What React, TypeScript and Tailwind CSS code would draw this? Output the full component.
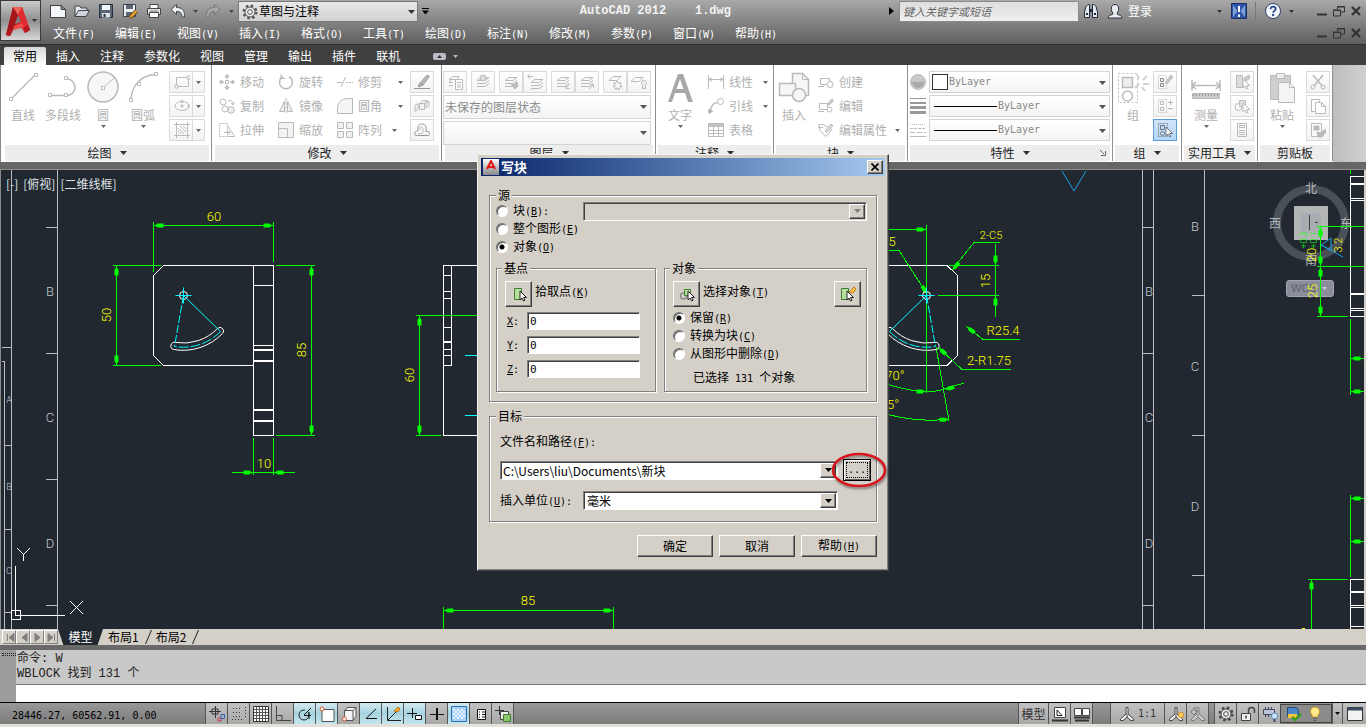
import type { ReactNode } from 'react'
import clsx from 'clsx'

const RAISED =
  'border border-white border-r-[#404040] border-b-[#404040] shadow-[inset_-1px_-1px_0_#808080]'
const SUNKEN =
  'border border-[#808080] border-r-white border-b-white shadow-[inset_1px_1px_0_#404040]'
const ETCHED =
  'border border-[#808080] shadow-[1px_1px_0_#fff,inset_1px_1px_0_#fff]'

/** 中文 12px、西文等宽 10px 的混排文字，`&` 后的字符加下划线 */
function Txt({ t }: { t: string }) {
  return (
    <span className="whitespace-pre">
      {t.split(/([\x20-\x7e]+)/).map((part, i) =>
        i % 2 ? (
          <span key={i} className="font-['DejaVu_Sans_Mono',monospace] text-[10px]">
            {part.split(/(&.)/).map((s, j) => (s[0] === '&' ? <u key={j}>{s[1]}</u> : s))}
          </span>
        ) : (
          part
        ),
      )}
    </span>
  )
}

function Ico({ children, s = 16, className }: { children: ReactNode; s?: number; className?: string }) {
  return (
    <svg
      width={s}
      height={s}
      viewBox={`0 0 ${s} ${s}`}
      fill="none"
      stroke="currentColor"
      className={clsx('flex-shrink-0', className)}
      aria-hidden="true"
    >
      {children}
    </svg>
  )
}

function Caret({ className }: { className?: string }) {
  return (
    <svg width="7" height="4" viewBox="0 0 7 4" className={clsx('flex-shrink-0', className)} aria-hidden="true">
      <path d="M0 0h7L3.5 4z" fill="currentColor" />
    </svg>
  )
}

function SmallCaret({ className }: { className?: string }) {
  return (
    <svg width="5" height="3" viewBox="0 0 5 3" className={clsx('flex-shrink-0', className)} aria-hidden="true">
      <path d="M0 0h5L2.5 3z" fill="currentColor" />
    </svg>
  )
}

/* ---------- 标题栏 ---------- */

const quickIcons: { label: string; icon: ReactNode }[] = [
  {
    label: '新建',
    icon: <path d="M.500 2.500h10.500l4.500 4v8H.500z M11 2.500v4h4.500" fill="#f4f6f8" stroke="#3c4248" />,
  },
  {
    label: '打开',
    icon: (
      <>
        <path d="M1 13V3h5l1 2h6v3" fill="#e8ebee" stroke="#3c4248" />
        <path d="M1 13.500 4.500 7.500h11L12 13.500z" fill="#cfd5dc" stroke="#3c4248" />
      </>
    ),
  },
  {
    label: '保存',
    icon: (
      <>
        <path d="M1.500 1.500h13v13h-13z" fill="#5b6573" stroke="#22303f" />
        <path d="M4 2h8v5H4z" fill="#f2f4f7" stroke="none" />
        <path d="M4 10h8v4.500H4z" fill="#dfe3e8" stroke="none" />
        <path d="M5.500 11h2v3h-2z" fill="#22303f" stroke="none" />
      </>
    ),
  },
  {
    label: '另存为',
    icon: (
      <>
        <path d="M1.500 1.500h12v12h-12z" fill="#f0f1f3" stroke="#3a4350" />
        <path d="M4 2h7v4H4z M4 9h6v4H4z" fill="#5b6573" stroke="none" />
        <path d="M8 14.500 14.500 8" stroke="#7a4a08" strokeWidth="4" />
        <path d="M8.500 14 14.500 8" stroke="#f0b040" strokeWidth="2" />
      </>
    ),
  },
  {
    label: '打印',
    icon: (
      <>
        <path d="M4 1.500h8v5H4z" fill="#fff" stroke="#444" />
        <path d="M1.500 5.500h13v6h-13z" fill="#e3e3e3" stroke="#444" />
        <path d="M3.500 9.500h9v5h-9z" fill="#fff" stroke="#444" />
        <path d="M4 8h8" stroke="#777" />
      </>
    ),
  },
  {
    label: '放弃',
    icon: (
      <path
        d="M1 6.500 6.500 1.500v3c5 0 8 2 8 8v1.500h-2.500c0-4-1.500-5.500-5.500-5.500v3z"
        fill="#eef1f4"
        stroke="#3e454c"
      />
    ),
  },
]

function TitleBar() {
  return (
    <header className="flex h-[45px] flex-shrink-0 border-b border-[#2f2f2f] bg-linear-to-b from-[#a9a9a9] to-[#5f5f5f]">
      <button
        aria-label="应用程序菜单"
        className="flex h-[41px] w-[41px] items-center justify-center gap-px border border-[#3a3a3a] bg-linear-to-b from-[#c9c9c9] via-[#8f8f8f] to-[#d8d8d8] text-[#333]"
      >
        <Logo />
        <SmallCaret />
      </button>
      <div className="min-w-0 flex-1">
        <div className="flex h-[22px] items-center">
          <div className="flex flex-1 items-center">
            <div className="ml-[9px] flex items-center gap-2">
              {quickIcons.map((q) => (
                <button key={q.label} aria-label={q.label}>
                  <Ico>{q.icon}</Ico>
                </button>
              ))}
            </div>
            <SmallCaret className="ml-[7px] text-[#444]" />
            <button aria-label="重做" className="ml-[7px]">
              <Ico>
                <path
                  d="M15 6.500 9.500 1.500v3c-5 0-8 2-8 8v1.500H4c0-4 1.500-5.500 5.500-5.500v3z"
                  fill="#a8a8a8"
                  stroke="#777"
                />
              </Ico>
            </button>
            <SmallCaret className="ml-2 text-[#444]" />
            <div className="relative ml-1 h-[21px] w-[180px] border border-[#777] bg-linear-to-b from-[#e8e8e8] to-[#d2d2d2]">
              <GearIcon className="absolute left-[3px] top-[2px] text-[#555]" />
              <select
                aria-label="工作空间"
                className="block h-full w-full appearance-none bg-transparent pl-[20px] text-[12px] leading-none text-black"
              >
                <option>草图与注释</option>
              </select>
              <Caret className="pointer-events-none absolute right-[2px] top-2 text-[#333]" />
            </div>
            <svg width="7" height="7" viewBox="0 0 7 7" className="ml-1 text-black" aria-hidden="true">
              <path d="M0 .500h7" stroke="currentColor" />
              <path d="M0 2.500h7L3.500 6.500z" fill="currentColor" />
            </svg>
          </div>
          <h1 className="mr-[158px] whitespace-pre font-['Liberation_Mono',monospace] text-[12px] font-bold text-[#f2f2f2]">
            AutoCAD 2012    1.dwg
          </h1>
          <div className="flex items-center">
            <svg width="5" height="8" viewBox="0 0 5 8" className="mr-[5px]" aria-hidden="true">
              <path d="M0 0v8l5-4z" />
            </svg>
            <input
              aria-label="搜索"
              placeholder="键入关键字或短语"
              className="h-[21px] w-[180px] border border-[#8a8a8a] bg-linear-to-b from-[#dedede] to-[#efefef] px-[3px] text-[11px] italic placeholder:text-[#666]"
            />
            <button aria-label="查找" className="ml-1">
              <Ico>
                <path
                  d="M3 3.500 5 1.500h1.500V14.500h-5V9zM13 3.500 11 1.500H9.500V14.500h5V9z"
                  fill="#e6eaf0"
                  stroke="#1f2a3a"
                />
                <path d="M6.500 6h3v3h-3z" fill="#1f2a3a" stroke="none" />
                <path d="M3 11h2M11 11h2" stroke="#1f2a3a" strokeWidth="2" />
              </Ico>
            </button>
            <button className="ml-2 flex items-center gap-[5px] text-[12px] text-white">
              <Ico>
                <path d="M1 15c0-2 2-3 4.500-3.500L6 10C3.500 8 3.500 1.500 8 1.500S12.500 8 10 10l.500 1.500C13 12 15 13 15 15z" fill="#e9edf2" stroke="#28303a" />
              </Ico>
              登录
            </button>
            <SmallCaret className="ml-[65px] text-[#333]" />
            <button aria-label="Autodesk Exchange" className="ml-[9px]">
              <Ico>
                <path d="M.500.500h15v15H.500z" fill="#2f55a8" stroke="#1b2f66" />
                <path d="M2 2l4.500 6L2 14zM14 2 9.500 8l4.500 6z" fill="#7f9fd8" stroke="none" />
                <path d="M8 3v6M8 11.500V14" stroke="#fff" strokeWidth="2" />
              </Ico>
            </button>
            <div className="ml-2 h-[18px] w-px bg-[#777]" />
            <button aria-label="帮助" className="ml-[9px]">
              <svg width="16" height="16" viewBox="0 0 16 16" aria-hidden="true">
                <circle cx="8" cy="8" r="7.500" fill="#f5f8fc" stroke="#2c3e63" />
                <path d="M5.500 6.200c0-3.600 5.200-3.200 5.200-.2 0 1.900-2.500 1.900-2.500 3.800" fill="none" stroke="#2a4c90" strokeWidth="1.800" />
                <circle cx="8.100" cy="12" r="1.200" fill="#2a4c90" />
              </svg>
            </button>
            <SmallCaret className="ml-2 text-[#333]" />
            <div className="ml-[23px] mr-[5px]">
              <WindowButtons target="应用程序" />
            </div>
          </div>
        </div>
        <div className="flex h-[22px] items-center">
          <nav className="flex flex-1 pl-[12px] text-[12px] text-white">
            {['文件(F)', '编辑(E)', '视图(V)', '插入(I)', '格式(O)', '工具(T)', '绘图(D)', '标注(N)', '修改(M)', '参数(P)', '窗口(W)', '帮助(H)'].map(
              (m) => (
                <button key={m} className="w-[62px] text-left">
                  <Txt t={m} />
                </button>
              ),
            )}
          </nav>
          <div className="mr-[5px]">
            <WindowButtons target="图形" />
          </div>
        </div>
      </div>
    </header>
  )
}

function WindowButtons({ target }: { target: string }) {
  return (
    <div className="flex items-center gap-[6px] text-[#333]">
      <button aria-label={`最小化${target}`}>
        <Ico s={10}><path d="M0 8.500h10" strokeWidth="2" /></Ico>
      </button>
      <button aria-label={`还原${target}`}>
        <Ico s={12}><path d="M4.500 4V1.500h7V7H8M4 2h8M.500 5.500h7V11h-7zM0 5h8" /></Ico>
      </button>
      <button aria-label={`关闭${target}`}>
        <Ico s={10}><path d="M1 1l8 8M9 1 1 9" strokeWidth="2.400" /></Ico>
      </button>
    </div>
  )
}

function Logo() {
  return (
    <svg width="26" height="32" viewBox="0 0 26 32" aria-hidden="true">
      <path d="M8 2h9l8 23-5 3-4-6-8 2-3 7-4-1z" fill="#d21f24" />
      <path d="M8 2 1 30l4 1 4-8 4-13z" fill="#a3161a" />
      <path d="M8 2h9l-4 8z" fill="#f0635a" />
      <path d="M13 10 17 2l8 23-5 3z" fill="#e02c30" />
      <path d="M13 10l-3 9 6-2z" fill="#7b7b7b" />
      <path d="M9 21l8-3 2 4-11 3z" fill="#f04a44" />
      <path d="M1 30l4 1 3-7-2-1zM20 28l5-3-2-5-4 3z" fill="#b5181d" />
    </svg>
  )
}

function GearIcon({ className }: { className?: string }) {
  return (
    <Ico className={className}>
      <circle cx="8" cy="8" r="6.300" strokeWidth="2.400" strokeDasharray="2.500 2.450" />
      <circle cx="8" cy="8" r="5" fill="#e8e8e8" />
      <circle cx="8" cy="8" r="2.300" fill="#fafafa" />
    </Ico>
  )
}

/* ---------- 功能区 ---------- */

function RibbonTabs() {
  return (
    <nav className="flex h-[20px] flex-shrink-0 items-end bg-[#404040] pl-1 text-[12px] text-white">
      <button className="h-[18px] rounded-t-[2px] bg-linear-to-b from-[#d8d8d8] to-white px-[9px] leading-[16px] text-black">常用</button>
      {['插入', '注释', '参数化', '视图', '管理', '输出', '插件', '联机'].map((t) => (
        <button key={t} className="h-[18px] px-[10px] leading-[16px]">{t}</button>
      ))}
      <button aria-label="最小化功能区" className="ml-[23px] flex h-[18px] items-center gap-[7px] text-[#bbb]">
        <svg width="13" height="7" viewBox="0 0 13 7" aria-hidden="true">
          <rect width="13" height="7" rx="2" fill="#b9bdc4" />
          <path d="M4 5h5L6.500 2z" fill="#333" />
        </svg>
        <SmallCaret />
      </button>
    </nav>
  )
}

function Panel({ title, className, children, caret = true, launcher }: {
  title: string
  className: string
  children: ReactNode
  caret?: boolean
  launcher?: boolean
}) {
  return (
    <section className={clsx('flex flex-shrink-0 flex-col border-r border-[#8f8f8f]', className)}>
      <div className="flex h-[80px] pt-[6px] text-[#bababa]">{children}</div>
      <button className="relative mx-[2px] flex h-[16px] items-center justify-center gap-2 bg-[#ededed] text-[12px] leading-none text-[#222]">
        {title}
        {caret && <Caret className="text-[#333]" />}
        {launcher && (
          <Ico s={8} className="absolute right-[3px] top-1 text-[#666]">
            <path d="M1 1l4 4M6.500 2v4.500H2" />
          </Ico>
        )}
      </button>
    </section>
  )
}

function Big({ label, icon, caret, className = 'w-10' }: {
  label?: string
  icon: ReactNode
  caret?: boolean
  className?: string
}) {
  return (
    <button className={clsx('flex h-[64px] flex-shrink-0 flex-col items-center', className)}>
      <Ico s={32}>{icon}</Ico>
      <span className="mt-1 text-[12px] leading-[16px] whitespace-nowrap text-[#b0b0b0]">{label}</span>
      {caret && <SmallCaret className="mt-[2px] text-[#666]" />}
    </button>
  )
}

function Item({ label, icon, caret, className = 'w-[59px]' }: {
  label: string
  icon: ReactNode
  caret?: string
  className?: string
}) {
  return (
    <button className={clsx('flex h-[22px] items-center gap-[5px] text-[12px] leading-none whitespace-nowrap', className)}>
      <Ico>{icon}</Ico>
      <span className="text-[#b0b0b0]">{label}</span>
      {caret && <SmallCaret className={clsx('text-[#666]', caret)} />}
    </button>
  )
}

function IconBox({ label, icon, active, split }: { label: string; icon: ReactNode; active?: boolean; split?: boolean }) {
  return (
    <button
      aria-label={label}
      className={clsx(
        'flex h-[22px] items-center border',
        split ? 'w-9 justify-between pl-[4px]' : 'w-6 justify-center',
        active
          ? 'border-[#5b9bd8] bg-linear-to-b from-[#cfe4fa] to-[#b5d6f6] text-[#6b7480]'
          : 'border-[#dadada] bg-linear-to-b from-white to-[#f3f3f3]',
      )}
    >
      <Ico>{icon}</Ico>
      {split && (
        <span className="flex h-full w-3 items-center justify-center border-l border-[#dadada]">
          <SmallCaret className="text-[#666]" />
        </span>
      )}
    </button>
  )
}

function RibbonSelect({ label, value, className, children, mono }: {
  label: string
  value: string
  className: string
  children?: ReactNode
  mono?: boolean
}) {
  return (
    <div className="relative h-[22px] flex-1 border border-[#d4d4d4] bg-linear-to-b from-white to-[#f4f4f4]">
      <select
        aria-label={label}
        className={clsx(
          'block h-full w-full appearance-none bg-transparent leading-none text-[#8a8a8a]',
          mono ? "font-['DejaVu_Sans_Mono',monospace] text-[10px]" : 'text-[12px]',
          className,
        )}
      >
        <option>{value}</option>
      </select>
      {children}
      <Caret className="pointer-events-none absolute right-[3px] top-[9px] text-[#555]" />
    </div>
  )
}

const cursor = <path d="M9 5v9l2-2 1.500 3 1.500-.700-1.500-2.800h3z" fill="#fff" />
const layers = <path d="M2 12.500h8l4-3M2 9.500h8l4-3M6 3.500h8l-4 3H2z" fill="none" />

function Ribbon() {
  return (
    <div className="flex h-[97px] flex-shrink-0 overflow-hidden border-l border-[#888] bg-white pb-px">
      <Panel title="绘图" className="w-[211px] pl-[2px]">
        <Big
          label="直线"
          icon={<><path d="M4 28 28 4" strokeWidth="1.500" /><path d="M2.500 26.500h3v3h-3zM27.500 2.500h3v3h-3z" fill="#fff" /></>}
        />
        <Big
          label="多段线"
          icon={<><path d="M4 24.500h15c12 0 12-16 0-17" strokeWidth="1.500" /><path d="M1.500 22.500h3v3h-3zM17.500 22.500h3v3h-3zM17.500 5.500h3v3h-3z" fill="#fff" /></>}
        />
        <Big
          label="圆"
          caret
          icon={<><circle cx="16" cy="16" r="15" fill="#f7f7f7" strokeWidth="1.500" /><path d="M16 17 27 7" /><path d="M14.500 15.500h3v3h-3z" fill="#fff" /></>}
        />
        <Big
          label="圆弧"
          caret
          icon={<><path d="M4 28C5 14 14 4 29 3.500" strokeWidth="1.500" /><path d="M2.500 27.500h3v3h-3zM10.500 11.500h3v3h-3zM27.500 1.500h3v3h-3z" fill="#fff" /></>}
        />
        <div className="ml-[6px] flex flex-col gap-[2px]">
          <IconBox split label="矩形" icon={<><path d="M2.500 3.500h12v9h-12z" /><path d="M1 11h3v3H1zM13 2h3v3h-3z" fill="#fff" /></>} />
          <IconBox split label="椭圆" icon={<><ellipse cx="8" cy="8" rx="7" ry="4.500" /><path d="M8 6v4M6 8h4" /><path d="M14 7h2v2h-2zM7 2.500h2v2H7z" fill="#fff" /></>} />
          <IconBox split label="图案填充" icon={<path d="M0 2.500h16M0 13.500h16M2.500 0v16M13.500 0v16M4 6l6 6M4 9l3 3M6 4l6 6M9 4l3 3" />} />
        </div>
      </Panel>

      <Panel title="修改" className="w-[230px] pl-[1px]">
        <div className="ml-[6px] flex flex-col gap-[2px]">
          <Item label="移动" icon={<><path d="M8 1v4M8 11v4M1 8h4M11 8h4M6 3l2-2 2 2M6 13l2 2 2-2M3 6 1 8l2 2M13 6l2 2-2 2" strokeWidth="1.500" /><path d="M6.500 6.500h3v3h-3z" /></>} />
          <Item label="复制" icon={<><circle cx="4" cy="4" r="3" /><circle cx="6" cy="11" r="3" /><circle cx="12" cy="12" r="3.300" fill="#eee" /><path d="M9 3c3-1 5 0 5 3M12 5l2 2 1.500-2.500" /></>} />
          <Item label="拉伸" icon={<><path d="M.500 1.500h8v13h-8z" strokeDasharray="2 1" /><path d="M9 4l6.500 10.500H9M5 10.500h6M9 8.500l2 2-2 2" /></>} />
        </div>
        <div className="flex flex-col gap-[2px]">
          <Item label="旋转" icon={<><path d="M5 2.500A6.500 6.500 0 1 0 11 2.500" strokeWidth="1.500" /><path d="M3 0v4.500h4.500" /></>} />
          <Item label="镜像" icon={<><path d="M6.500 3v10.500h-5zM9.500 3v10.500h5z" fill="#eee" /><path d="M8 0v16" strokeDasharray="3 1" /></>} />
          <Item label="缩放" icon={<path d="M.500 .500h15v15H.500zM.500 6.500h9v9h-9z" fill="#f2f2f2" />} />
        </div>
        <div className="flex w-[73px] flex-col gap-[2px]">
          <Item label="修剪" caret="ml-[11px]" className="w-[73px]" icon={<path d="M0 8.500h5M4 13 8.500 3M9 8.500h2M12 8.500h2M15 8.500h1" />} />
          <Item label="圆角" caret="ml-[11px]" className="w-[73px]" icon={<path d="M.500 15.500V10A9.500 9.500 0 0 1 10 .500h5.500v15z" fill="#f5f5f5" />} />
          <Item label="阵列" caret="ml-[5px]" className="w-[73px]" icon={<path d="M.500 .500h6v6h-6zM9.500 .500h6v6h-6zM.500 9.500h6v6h-6zM9.500 9.500h6v6h-6z" fill="#f0f0f0" />} />
        </div>
        <div className="flex flex-col gap-[2px]">
          <IconBox label="删除" icon={<><path d="M6 9 13 1l2.500 1.500L9 11l-4 2-1-1z" fill="#bbb" stroke="#999" /><path d="M0 14.500h16M6 9l3 2" stroke="#999" /></>} />
          <IconBox label="分解" icon={<path d="M1 7.500 4 5.500v6l-3 2zM5.500 5.500h5v6h-5zM5.500 5.500l3-3h5l-3 3M12 5l3-2v5l-3 2z" fill="#f3f3f3" />} />
          <IconBox label="偏移" icon={<><path d="M3.500 13.500h11c1.500 0 1.500-4-.500-4h-2V5c0-4-8-4-8 0v4H2.500c-2 0-2 4.500-1 4.500z" stroke="#999" /><path d="M4 11.500h4c2-1 1-5 .500-6-2-2-3 0-2 3" /></>} />
        </div>
      </Panel>

      <Panel title="图层" className="w-[214px] pl-[1px]">
        <div className="flex w-[208px] flex-col gap-[2px]">
          <div className="flex gap-1">
            <IconBox label="图层特性" icon={<><path d="M6 2.500h6l-2 3H2zM2 8.500h4M2 11.500h4M4 6l-2 2.500" /><path d="M8.500 5.500h7v10h-7zM10 8.500h4M10 11h4M10 13h4" fill="#fff" /></>} />
            <IconBox label="隔离" icon={<>{layers}<circle cx="8" cy="4" r="3" fill="#ddd" /></>} />
            <div className="flex">
              <IconBox label="匹配" icon={<>{layers}<path d="M8 10l3 1 3-3 1 4-3 3z" fill="#bbb" /></>} />
              <IconBox label="上一个" icon={<><g transform="translate(2 2)">{layers}</g><path d="M6 2.500H1M3 0 .500 2.500 3 5" /></>} />
            </div>
            <div className="flex">
              <IconBox label="置为当前" icon={<>{layers}<path d="M15 10l-4 4M11 11v3.500h3.500" /></>} />
              <IconBox label="更改到当前" icon={<>{layers}<path d="M10 15l4-4M11 10.500h3.500V14" /></>} />
            </div>
            <div className="flex">
              <IconBox label="冻结" icon={<><path d="M6 2.500h8l-4 4H2z" /><circle cx="10.500" cy="11.500" r="3.500" strokeDasharray="2 1" strokeWidth="2" /></>} />
              <IconBox label="关" icon={<><path d="M4 3.500h8l-4 4H0z" /><path d="M10.500 8.500c0-3 5-3 5 0 0 1.500-1 2-1 3v3h-3v-3c0-1-1-1.500-1-3z" fill="#eee" /></>} />
            </div>
          </div>
          <RibbonSelect label="图层状态" value="未保存的图层状态" className="pl-[1px]" />
          <RibbonSelect label="图层" value="" className="pl-[1px]" />
        </div>
      </Panel>

      <Panel title="注释" className="w-[118px]">
        <Big label="文字" caret className="w-[48px]" icon={<path d="M4 31 14 3h5l10 28h-5l-3-9H11l-3 9zM12.500 18h7L16 8z" fill="#a8a8a8" stroke="none" />} />
        <div className="ml-1 flex flex-col gap-[2px]">
          <Item label="线性" caret="ml-[5px]" icon={<path d="M.500 1v14M15.500 1v14M1 5.500h14M4 3.500l-3 2 3 2M12 3.500l3 2-3 2" />} />
          <Item label="引线" caret="ml-[5px]" icon={<><path d="M2 14C3 8 5 4.500 9.500 4.500" strokeWidth="1.500" /><path d="M.500 11 1 15.500l4-2.500" fill="#aaa" /><circle cx="12.500" cy="3.500" r="3" /></>} />
          <Item label="表格" icon={<><path d="M.500 1.500h15v13H.500z" /><path d="M1 2h14v3H1z" fill="#c4c4c4" stroke="none" /><path d="M1 8.500h14M1 11.500h14M5.500 5v10M10.500 5v10" /></>} />
        </div>
      </Panel>

      <Panel title="块" className="w-[134px]">
        <Big label="插入" icon={<><path d="M14.500 2.500h10l6 6v16h-16z" fill="#f6f6f6" strokeWidth="1.500" /><path d="M24.500 2.500v6h6" /><path d="M1.500 12.500h16v12h-16z" fill="#f6f6f6" strokeWidth="1.500" /><circle cx="21" cy="24" r="6.500" fill="#f6f6f6" strokeWidth="1.500" /></>} />
        <div className="ml-1 flex flex-col gap-[2px]">
          <Item label="创建" icon={<><path d="M2.500 4.500h9v6h-9zM0 12.500h6" /><circle cx="12" cy="10.500" r="3" fill="#fff" /></>} />
          <Item label="编辑" icon={<><path d="M1.500 5.500h8v6h-8zM0 13.500h6" /><circle cx="11.500" cy="11.500" r="2.500" fill="#fff" /><path d="M9 6l5-5 1.500 2-4.500 4z" fill="#ccc" /></>} />
          <Item label="编辑属性" caret="ml-[3px]" className="w-[86px]" icon={<><path d="M1 2.500h4l9 5-6 7-6-6zM0 5.500h5" /><path d="M7 9l6-7 2 1.500-6 7z" fill="#ddd" /></>} />
        </div>
      </Panel>

      <Panel title="特性" className="w-[205px]" launcher>
        <div className="mx-[2px] flex flex-1 flex-col gap-[2px]">
          <div className="flex items-center gap-[3px]">
            <Ico><circle cx="8" cy="8" r="7.500" fill="#c8c8c8" /><path d="M1 8h14" /><path d="M2 8a6 6 0 0 0 12 0z" fill="#a9a9a9" stroke="none" /></Ico>
            <RibbonSelect label="对象颜色" value="ByLayer" className="pl-[19px]" mono>
              <span className="pointer-events-none absolute left-[2px] top-[2px] h-4 w-4 border border-[#333] bg-white" />
            </RibbonSelect>
          </div>
          {['线宽', '线型'].map((label) => (
            <div key={label} className="flex items-center gap-[3px]">
              <Ico>
                {label === '线宽' ? (
                  <path d="M0 0h16v1H0zM0 4h16v2H0zM0 8h16v3H0zM0 13h16v3H0z" fill="#999" stroke="none" />
                ) : (
                  <><path d="M0 2.500h16" strokeDasharray="1 1" /><path d="M0 6.500h16" strokeDasharray="3 1" /><path d="M0 10.500h16" strokeDasharray="5 2" /><path d="M0 14.500h16" /></>
                )}
              </Ico>
              <RibbonSelect label={label} value="ByLayer" className="pl-[68px]" mono>
                <span className="pointer-events-none absolute left-[4px] top-[10px] h-px w-[63px] bg-black" />
              </RibbonSelect>
            </div>
          ))}
        </div>
      </Panel>

      <Panel title="组" className="w-[69px]">
        <Big label="组" icon={<><path d="M1.500 2.500h19v29h-19z" strokeDasharray="2 2" /><path d="M5.500 6.500h10v10h-10z" fill="#eee" strokeWidth="1.500" /><circle cx="10.500" cy="25" r="5" strokeWidth="1.500" /><path d="M18 17l4-4M22 8l-2-5M26 9l4-4M26 13h6M25 16l3 4" strokeWidth="2" stroke="#d2d2d2" /></>} />
        <div className="flex flex-col gap-[2px]">
          <IconBox label="解除编组" icon={<><path d="M1.500 1.500h8v13h-8z" strokeDasharray="1 1" /><path d="M3.500 4.500h3v3h-3zM3.500 9.500h3v3h-3z" stroke="#888" /><path d="M8 9l6-8 2 2-6 7z" fill="#ccc" /></>} />
          <IconBox label="组编辑" icon={<><path d="M1.500 1.500h8v13h-8z" strokeDasharray="1 1" /><path d="M3.500 3.500h3v3h-3zM3.500 9.500h3v3h-3zM11 4.500h5M13.500 2v5M11 10.500h5" /></>} />
          <IconBox active label="启用组选择" icon={<><path d="M1.500 1.500h9v13h-9z" strokeDasharray="1 1" /><path d="M3.500 3.500h4v4h-4z" /><circle cx="5.500" cy="11.500" r="2" />{cursor}</>} />
        </div>
      </Panel>

      <Panel title="实用工具" className="w-[76px]">
        <Big label="测量" caret className="w-[48px]" icon={<><path d="M2 9v11M30 9v11M2 14.500h28M6 11l-4 3.500L6 18M26 11l4 3.500-4 3.500" strokeWidth="1.500" /><path d="M2.500 22.500h27v5h-27z" fill="#ccc" /><path d="M3 24h26" stroke="#999" strokeDasharray="1 2" strokeWidth="2" /></>} />
        <div className="flex flex-col gap-[2px]">
          <IconBox label="快速选择" icon={<><path d="M2.500 1.500h6v12h-6z" fill="#ddd" /><path d="M10 4l5-3 1 3-4 3z" fill="#ccc" />{cursor}</>} />
          <IconBox label="全部选择" icon={<><circle cx="4.500" cy="9" r="3.500" /><path d="M5.500 2.500h6v6h-6z" fill="#ddd" />{cursor}</>} />
          <IconBox label="快速计算器" icon={<path d="M3.500 1.500h9v13h-9zM5.500 3.500h5v2h-5zM5 8.500h6M5 10.500h6M5 12.500h6" />} />
        </div>
      </Panel>

      <Panel title="剪贴板" className="w-[75px]" caret={false}>
        <Big label="粘贴" caret className="w-[48px]" icon={<><path d="M4.500 4.500h20v24h-20z" fill="#cfcfcf" /><path d="M10.500 2.500h8v5h-8z" fill="#eee" /><path d="M12.500 11.500h11l5 5v15h-16z" fill="#f4f4f4" /><path d="M23.500 11.500v5h5" /></>} />
        <div className="flex flex-col gap-[2px]">
          <IconBox label="剪切" icon={<><path d="M3 1l9 11M13 1 4 12" strokeWidth="1.500" /><circle cx="3" cy="13" r="2" /><circle cx="13" cy="13" r="2" /></>} />
          <IconBox label="复制" icon={<><path d="M1.500 1.500h8v12h-8z" fill="#fff" /><path d="M5.500 4.500h6l4 4v7h-10zM11.500 4.500v4h4" fill="#fff" /></>} />
          <IconBox label="特性匹配" icon={<><path d="M1.500 1.500h10v13h-10z" /><path d="M4 4h5v4H4z" fill="#bbb" /><path d="M7 10l4 1 4-4 1 3-4 5H8z" fill="#bbb" /></>} />
        </div>
      </Panel>
      <div className="-mb-px flex-1 bg-linear-to-r from-[#bdbdbd] to-[#d0d0d0]" />
    </div>
  )
}

/* ---------- 绘图区 ---------- */

function Arrow({ x, y, a }: { x: number; y: number; a: number }) {
  return <path d="M0 0 3 -1 4 -2h6v4H4L3 1z" transform={`translate(${x} ${y}) rotate(${a})`} fill="#00ff00" stroke="none" />
}

// a 为箭尾方向的角度：0 表示箭尖朝左
const arrows: [number, number, number][] = [
  [153, 225, 0], [273, 225, 180], [116, 265, 90], [116, 365, -90],
  [311, 265, 90], [311, 435, -90], [253, 472, 180], [273, 472, 0],
  [419, 315, 90], [419, 435, -90], [443, 610, 0], [613, 610, 180],
  [926, 229, 180], [927, 294, -122], [952, 270, -52], [995, 265, -90], [995, 295, 90],
  [966, 326, 38], [938, 347, 43], [926, 391, 180], [944, 389, -14], [949, 419, 178],
  [1320, 226, 90], [1320, 266, -90], [1320, 266, 90], [1320, 316, -90],
  [1350, 358, 0], [1350, 391, 0], [1350, 498, 0], [1350, 541, 0], [1311, 579, 90],
]

const frameLetters: [number, number, string][] = [
  [50, 296, 'B'], [50, 422, 'C'], [50, 548, 'D'],
  [1195, 231, 'B'], [1149, 296, 'B'], [1195, 371, 'C'], [1149, 422, 'C'], [1195, 511, 'D'], [1149, 548, 'D'],
]

const dimTexts: { x: number; y: number; t: string; v?: boolean }[] = [
  { x: 214, y: 221, t: '60' }, { x: 264, y: 468, t: '10' }, { x: 528, y: 605, t: '85' },
  { x: 111, y: 315, t: '50', v: true }, { x: 306, y: 350, t: '85', v: true }, { x: 414, y: 375, t: '60', v: true },
  { x: 892, y: 246, t: '5' }, { x: 990, y: 281, t: '15', v: true }, { x: 1003, y: 335, t: 'R25.4' },
  { x: 989, y: 365, t: '2-R1.75' }, { x: 895, y: 380, t: '70°' }, { x: 893, y: 409, t: '5°' },
  { x: 1316, y: 255, t: '20', v: true }, { x: 1317, y: 291, t: '25', v: true },
]

function Slot() {
  return (
    <>
      <g stroke="#fff">
        <circle r="4" />
        <path d="M34 33A48 48 0 0 1-8 47A3 3 0 0 0-10 54A55 55 0 0 0 39 38A3 3 0 0 0 34 33z" />
      </g>
      <g stroke="#00ffff">
        <path d="M-8 0H8M0-8V8M0 0 37 36" />
        <path d="M0 0-9 51" strokeDasharray="8 2" />
        <path d="M37 36A52 52 0 0 1-9 51" strokeDasharray="10 2" />
      </g>
    </>
  )
}

function Drawing() {
  return (
    <svg className="pointer-events-none absolute inset-0 h-full w-full" fill="none" role="img" aria-label="图形">
      {/* 图形坐标以窗口左上角为原点 */}
      <g transform="translate(-1 -170)">
        <g stroke="#b9bec6" shapeRendering="crispEdges">
          <path d="M11.500 170V629M57.500 170V629M4.500 361V629M2 347.500H11M2 361.500H4M4 445.500H11M4 529.500H11M4 612.500H11" />
          <path d="M46 227.500H57M46 353.500H57M46 479.500H57M46 605.500H57" />
          <path d="M1142.500 170V629M1153.500 170V629M1204.500 170V629" />
          <path d="M1142 227.500H1153M1142 353.500H1153M1142 605.500H1153M1192 295.500H1204M1192 435.500H1204M1192 575.500H1204" />
        </g>
        <g fill="#c3c8d0" textAnchor="middle" className="font-['Roboto',sans-serif] text-[13px] font-light">
          {frameLetters.map(([x, y, t]) => <text key={`${x}-${y}`} x={x} y={y}>{t}</text>)}
          <g className="text-[9px]">
            <text x="9" y="403">A</text>
            <text x="9" y="490">B</text>
            <text x="9" y="574">C</text>
          </g>
        </g>

        <g stroke="#fff" shapeRendering="crispEdges">
          <path d="M153.500 275.500 163.500 265.500H273.500V435.500H253.500V365.500H163.500L153.500 355.500zM253.500 265V365M253 285.500H273M253 345.500H273" />
          <path d="M253 350H273M253 361H273M253 410H273M253 421H273" strokeWidth="2" />
          <path d="M478 265.500H443.500V435.500H478M451.500 265V365M443 275.500H451M443 291.500H451M443 298.500H451M443 327.500H451M443 349.500H451M443 355.500H451M443 365.500H452" />
          <path d="M443 342H451" strokeWidth="2" />
          <path d="M886 265.500H947L957.500 275.500V355.500L947 365.500H886" />
          <path d="M1366 176.500H1350.500V316.500H1366M1350 198.500H1366M1350 200.500H1366M1350 308.500H1366M1350 310.500H1366" />
          <path d="M1350 184H1366M1350 294H1366M1350 592H1366" strokeWidth="2" />
          <path d="M1366 579.500H1350.500V629M1350 605.500H1366M1350 607.500H1366M1350 626.500H1366" />
        </g>

        <g stroke="#00ff00" shapeRendering="crispEdges">
          <path d="M153 225.500H273M153.500 222V272M273.500 222V262" />
          <path d="M116.500 265V365M113 265.500H161M113 365.500H161" />
          <path d="M311.500 265V435M276 265.500H315M276 435.500H315" />
          <path d="M232 472.500H295M253.500 438V475M273.500 438V475" />
          <path d="M419.500 315V435M416 315.500H478M416 435.500H441" />
          <path d="M443 610.500H613M443.500 607V629M613.500 607V629" />
          <path d="M886 229.500H926M926.500 225V393" />
          <path d="M886 250.500H899L927 294M1000 242.500H974L952 270" />
          <path d="M995.500 244V317M949 265.500H999M938 295.500H999" />
          <path d="M1020 339.500H983L966 326M1011 369.500H962L938 347" />
          <path d="M886 384Q926 396 944 389L964 383M886 414Q920 423 949 419M936 347 949 421" />
          <path d="M1317 226.500H1366M1317 266.500H1366M1317 316.500H1348M1320.500 226V316M1350.500 170V174M1350.500 319V395" />
          <path d="M1350 358.500H1366M1350 391.500H1366M1350.500 495V577M1350 498.500H1366M1350 541.500H1366M1308 579.500H1348M1311.500 579V629" />
        </g>
        {arrows.map(([x, y, a]) => <Arrow key={`${x}-${y}-${a}`} x={x + 0.5} y={y + 0.5} a={a} />)}

        <g transform="translate(183.500 295.500)"><Slot /></g>
        <g transform="translate(926.500 295.500) scale(-1 1)"><Slot /></g>
        <path d="M465 355.500H478M465 415.500H478" stroke="#00ffff" />
        <path d="M1062 171 1074 191 1086 171M1321 245 1331 238V250zM1321 245 1343 257" stroke="#1ea0e6" />
        <path d="M1302 628.500H1305" stroke="#ffff00" />

        <g fill="#ffff00" textAnchor="middle" className="font-['Roboto',sans-serif] text-[13px] font-light">
          {dimTexts.map((d) => (
            <text key={`${d.x}-${d.y}`} transform={`translate(${d.x} ${d.y})${d.v ? ' rotate(-90)' : ''}`}>{d.t}</text>
          ))}
          <g className="text-[11px]">
            <text x="991" y="239">2-C5</text>
            <text transform="translate(1342 245) rotate(-90)">3.2</text>
          </g>
          <g className="text-[9px]" fill="#00ff00">
            <text transform="translate(1307 240) rotate(-90)">+0.3</text>
            <text transform="translate(1317 240) rotate(-90)">+0.1</text>
          </g>
        </g>

        {/* UCS 图标 */}
        <g stroke="#fff">
          <path d="M15.500 566V615.500H65M11.500 610.500h9v9h-9z" shapeRendering="crispEdges" />
          <path d="M17 548 23.500 554.500 30 548M23.500 554V561M70 601 83 614M83 601 70 614" />
        </g>
      </g>
    </svg>
  )
}

function ViewCube() {
  return (
    <div className="absolute right-[12px] top-[10px] flex w-[84px] flex-col items-center text-[12px] leading-none text-[#b0b3b8]">
      <svg width="84" height="90" viewBox="0 0 84 90" aria-label="ViewCube" role="img">
        <circle cx="43" cy="43" r="34" fill="none" stroke="#8a8d94" strokeOpacity=".4" strokeWidth="8" />
        <path d="M26 26h34v34H26z" fill="#c4c4c4" fillOpacity=".9" />
        <path d="M33 33h20v20H33z" fill="#a9adb1" />
        <path d="M41.500 35v15M47 42.500h3" stroke="#3c3f44" />
        <g fill="#b4b7bc" textAnchor="middle">
          <text x="43" y="13">北</text>
          <text x="7" y="48">西</text>
          <text x="78" y="48">东</text>
          <text x="43" y="85">南</text>
        </g>
      </svg>
      <button className="mt-[10px] flex h-[17px] w-12 items-center gap-[5px] rounded-[3px] border border-[#a2a5b4] bg-[#a5a8b6]/80 pl-1 font-['Liberation_Sans',sans-serif] text-[11px] text-[#5c5f6a]">
        WCS
        <SmallCaret className="text-[#c8cad4]" />
      </button>
    </div>
  )
}

function Canvas() {
  return (
    <main className="relative min-h-0 flex-1 overflow-hidden border-l border-[#8a8a8a] border-r-2 border-r-[#d4d0c8] bg-[#212830]">
      <ViewCube />
      <Drawing />
      <div className="absolute left-[5px] top-[6px] flex gap-[5px] text-[12px] leading-[16px] text-[#dfe2e6]">
        <button>[-]</button>
        <button>[俯视]</button>
        <button>[二维线框]</button>
      </div>
    </main>
  )
}

/* ---------- 写块对话框 ---------- */

function Radio({ name, label, checked }: { name: string; label: string; checked?: boolean }) {
  return (
    <label className="flex h-[18px] items-center gap-[5px]">
      <input
        type="radio"
        name={name}
        defaultChecked={checked}
        className="h-3 w-3 appearance-none rounded-full border border-[#707070] border-r-white border-b-white bg-white shadow-[inset_1px_1px_0_#606060] checked:bg-[radial-gradient(circle,#000_2px,#fff_3px)]"
      />
      <Txt t={label} />
    </label>
  )
}

function ToolButton({ label, id, children }: { label?: string; id: string; children: ReactNode }) {
  return (
    <div className="flex items-start gap-[3px]">
      <button id={id} aria-label={label ? undefined : '快速选择'} className={clsx('flex h-[26px] w-[27px] items-center justify-center bg-[#d4d0c8]', RAISED)}>
        <Ico>{children}</Ico>
      </button>
      {label && <label htmlFor={id} className="leading-[20px]"><Txt t={label} /></label>}
    </div>
  )
}

function DropArrow({ disabled }: { disabled?: boolean }) {
  return (
    <span className={clsx('pointer-events-none absolute right-px top-px bottom-px flex w-[16px] items-center justify-center bg-[#d4d0c8]', RAISED)}>
      <Caret className={disabled ? 'text-[#808080]' : 'text-black'} />
    </span>
  )
}

const green = '#3f7d2e'

function WriteBlockDialog() {
  return (
    <div
      role="dialog"
      aria-label="写块"
      className="absolute left-1/2 top-[154px] w-[412px] -translate-x-1/2 border border-[#f4f2ee] border-r-[#404040] border-b-[#404040] bg-[#d4d0c8] p-[3px] pb-[13px] text-[12px] leading-[14px] text-black shadow-[inset_-1px_-1px_0_#808080]"
    >
      <div className="flex h-[18px] items-center bg-linear-to-r from-[#0a246a] to-[#a6caf0] px-[2px] text-white">
        <span className="flex h-4 w-4 items-center justify-center bg-linear-to-b from-white to-[#888]">
          <Ico s={14}>
            <path d="M3 9 7 1l4 8M4.500 7h5" stroke="#e01818" strokeWidth="2" />
          </Ico>
        </span>
        <h2 className="ml-[2px] text-[13px] font-bold">写块</h2>
        <button aria-label="关闭" className={clsx('ml-auto flex h-[14px] w-4 items-center justify-center bg-[#d4d0c8] text-black', RAISED)}>
          <Ico s={8}><path d="M.500.500l7 7M7.500.500l-7 7" strokeWidth="1.600" /></Ico>
        </button>
      </div>

      <div className="px-2">
        <fieldset className={clsx('mt-[12px] pb-[9px] pl-[6px] pr-[9px]', ETCHED)}>
          <legend className="bg-[#d4d0c8] px-[2px]">源</legend>
          <div className="flex h-[18px] items-center justify-between">
            <Radio name="source" label="块(&B):" />
            <div className={clsx('relative h-[19px] w-[284px]', SUNKEN)}>
              <select disabled aria-label="块" className="block h-full w-full appearance-none bg-transparent" />
              <DropArrow disabled />
            </div>
          </div>
          <Radio name="source" label="整个图形(&E)" />
          <Radio name="source" label="对象(&O)" checked />

          <div className="mt-[5px] flex gap-2">
            <fieldset className={clsx('w-[160px] pl-2 pr-[15px] pt-[6px]', ETCHED)}>
              <legend className="-ml-[3px] bg-[#d4d0c8] px-[2px]">基点</legend>
              <ToolButton id="pick" label="拾取点(&K)">
                <path d="M3.500 2.500h7v11h-7z" fill="#b5dd9c" stroke={green} />
                <g stroke="#222">{cursor}</g>
              </ToolButton>
              <div className="mt-[5px] flex flex-col gap-[6px]">
                {['X', 'Y', 'Z'].map((axis) => (
                  <label key={axis} className="flex items-center gap-2 pl-[2px]">
                    <Txt t={`&${axis}:`} />
                    <input
                      defaultValue="0"
                      className={clsx("h-[18px] w-0 flex-1 bg-white px-[2px] font-['DejaVu_Sans_Mono',monospace] text-[11px]", SUNKEN)}
                    />
                  </label>
                ))}
              </div>
            </fieldset>
            <fieldset className={clsx('flex-1 pb-[3px] pl-2 pr-[5px] pt-[6px]', ETCHED)}>
              <legend className="-ml-[3px] bg-[#d4d0c8] px-[2px]">对象</legend>
              <div className="flex justify-between">
                <ToolButton id="select" label="选择对象(&T)">
                  <circle cx="4.500" cy="10" r="3" stroke="#888" strokeWidth="1.500" />
                  <path d="M5.500 3.500h6v6h-6z" fill="#b5dd9c" stroke={green} />
                  <g stroke="#222">{cursor}</g>
                </ToolButton>
                <ToolButton id="quick">
                  <path d="M1.500 2.500h7v11h-7z" fill="#b5dd9c" stroke={green} />
                  <path d="m9 6 5-5 2 2-3 4z" fill="#f6c34a" stroke="#c8781a" />
                  <g stroke="#222" transform="translate(-2)">{cursor}</g>
                </ToolButton>
              </div>
              <div className="mt-[2px]">
                <Radio name="objects" label="保留(&R)" checked />
                <Radio name="objects" label="转换为块(&C)" />
                <Radio name="objects" label="从图形中删除(&D)" />
              </div>
              <p className="mt-[5px] pl-5 leading-[18px]"><Txt t="已选择 131 个对象" /></p>
            </fieldset>
          </div>
        </fieldset>

        <fieldset className={clsx('mt-[7px] pb-[11px] pl-[10px] pr-[5px] pt-[9px]', ETCHED)}>
          <legend className="-ml-1 bg-[#d4d0c8] px-[2px]">目标</legend>
          <label htmlFor="path" className="block leading-[18px]"><Txt t="文件名和路径(&F):" /></label>
          <div className="mt-[7px] flex h-[22px] items-center justify-between">
            <div className={clsx('relative h-[19px] w-[338px] bg-white', SUNKEN)}>
              <input
                id="path"
                defaultValue="C:\Users\liu\Documents\新块"
                className="block h-full w-full bg-transparent pl-[2px] pr-[18px] leading-none"
              />
              <DropArrow />
            </div>
            <div className="relative">
              <button aria-label="浏览" className="flex h-[22px] w-7 border border-black bg-[#d4d0c8] p-[2px] shadow-[inset_1px_1px_0_#fff,inset_-1px_-1px_0_#606060]">
                <span className="flex flex-1 items-center justify-center border border-dotted border-black font-['DejaVu_Sans_Mono',monospace] text-[10px] leading-none">...</span>
              </button>
              {/* 提示下一步点击位置的红圈 */}
              <svg width="56" height="36" viewBox="0 0 56 36" className="pointer-events-none absolute -left-[12px] -top-[7px] drop-shadow-[1px_2px_1px_rgba(0,0,0,0.4)]" aria-hidden="true">
                <ellipse cx="28" cy="18" rx="26" ry="16" fill="none" stroke="#d8141c" strokeWidth="2.500" />
              </svg>
            </div>
          </div>
          <div className="mt-[10px] flex items-center">
            <label htmlFor="unit" className="w-[83px]"><Txt t="插入单位(&U):" /></label>
            <div className={clsx('relative h-[19px] w-[255px] bg-white', SUNKEN)}>
              <select id="unit" className="block h-full w-full appearance-none bg-transparent pl-[3px] leading-none">
                <option>毫米</option>
              </select>
              <DropArrow />
            </div>
          </div>
        </fieldset>

        <div className="mt-[13px] flex justify-end gap-[6px]">
          {['确定', '取消', '帮助(&H)'].map((t) => (
            <button key={t} className={clsx('h-[22px] w-[76px] bg-[#d4d0c8]', RAISED)}><Txt t={t} /></button>
          ))}
        </div>
      </div>
    </div>
  )
}

/* ---------- 底部 ---------- */

function LayoutTabs() {
  const nav = ['M4.500 3v7M11 2.500v8l-5-4z', 'M10 2.500v8l-5-4z', 'M4 2.500v8l5-4z', 'M9.500 3v7M3 2.500v8l5-4z']
  const slash = <svg width="7" height="14" viewBox="0 0 7 14" aria-hidden="true"><path d="M.500 14 6.500 0" stroke="#222" /></svg>
  return (
    <nav className="flex h-[16px] flex-shrink-0 items-center bg-[#d4d0c8] pl-[2px] text-[12px] leading-none text-black">
      {nav.map((d, i) => (
        <button key={d} aria-label={`布局导航 ${i + 1}`} className="h-[14px] w-[14px] border border-white border-r-[#808080] border-b-[#808080] text-[#808080]">
          <Ico s={12}><path d={d} fill="currentColor" /></Ico>
        </button>
      ))}
      <button className="h-4 w-[45px] bg-[#212830] text-white [clip-path:polygon(0_0,100%_0,88%_100%,12%_100%)]">模型</button>
      <button className="ml-[5px] mr-[6px]">布局1</button>
      {slash}
      <button className="ml-1 mr-[6px]">布局2</button>
      {slash}
    </nav>
  )
}

function CommandLine() {
  return (
    <div className="flex h-[57px] flex-shrink-0 border-t-[5px] border-[#696969] bg-[#c8c8c8]">
      <div className="w-4 bg-[#9c9c9c] pl-[2px] pt-[3px]">
        <div className="h-[3px] border-y border-dotted border-[#222]" />
      </div>
      <div className="flex flex-1 flex-col">
        <pre className="h-[34px] pl-px pt-[2px] font-['Liberation_Mono','Noto_Sans_CJK_SC',monospace] text-[12px] leading-[15px] text-[#222]">{'命令: W\nWBLOCK 找到 131 个'}</pre>
        <input aria-label="命令行" className="h-0 w-full flex-1 border-t border-[#777] bg-white px-1 outline-none" />
      </div>
    </div>
  )
}

const toggles: { label: string; on?: boolean; icon: ReactNode }[] = [
  { label: '推断约束', icon: <><path d="M0 5.500h12M6.500 0v12M3 8V3h6v5z" stroke="#333" /><path d="M9 12h3v3H9z" stroke="#c44" /><path d="M12 8.500h3.500v4H12z" stroke="#36b" /></> },
  { label: '捕捉', icon: <path d="M2 2.500h9M2 6.500h9M2 10.500h9M14.500 1v11M1 13.500h12" strokeDasharray="1 2" /> },
  { label: '栅格', icon: <><path d="M.500.500h15v15H.500z" fill="#fff" /><path d="M3.500 1v14M6.500 1v14M9.500 1v14M12.500 1v14M1 3.500h14M1 6.500h14M1 9.500h14M1 12.500h14" stroke="#555" /></> },
  { label: '正交', icon: <path d="M1.500 0v14.500H16M2 9.500h5v5" stroke="#444" /> },
  { label: '极轴', on: true, icon: <><circle cx="7" cy="9" r="5" stroke="#222" strokeDasharray="24 4" /><path d="M7 9.500h7M7 9l7-7M12 6v7" stroke="#111" /></> },
  { label: '对象捕捉', on: true, icon: <><path d="M3 3.500h12v12H3z" fill="#fff" stroke="#555" /><circle cx="3" cy="3" r="2" fill="#fff" stroke="#e05a28" /></> },
  { label: '三维对象捕捉', icon: <><path d="M3.500 4.500 7 1.500h8v9l-3 4H3.500zM3.500 4.500h8.500v10M12 4.500l3-3" fill="#f2f4f8" stroke="#555" /><circle cx="3.500" cy="13" r="2" fill="#fff" stroke="#e05a28" /></> },
  { label: '对象追踪', on: true, icon: <path d="M13 3 3 12.500h11" stroke="#111" /> },
  { label: '动态UCS', on: true, icon: <><path d="M2.500 1v13.500H16M3 14 12 5" stroke="#222" /><path d="m9 5 4-4 2 2-2 3z" fill="#f6b73c" stroke="#c06a10" /></> },
  { label: '动态输入', on: true, icon: <><path d="M0 7.500h10M5.500 2v10" stroke="#111" /><path d="M8.500 9.500h6v4h-6z" fill="#fff" stroke="#111" /></> },
  { label: '线宽', icon: <><path d="M1 8.500h14" stroke="#111" /><path d="M8 2v12" stroke="#111" strokeWidth="2" /></> },
  { label: '透明度', on: true, icon: <><path d="M.500.500h15v15H.500z" fill="#a9d0f5" stroke="#2f6fb5" /><path d="M2 4h12M4 6h10M2 8h12M4 10h10M2 12h12" stroke="#e6f3ff" strokeWidth="2" strokeDasharray="2 2" /></> },
  { label: '快捷特性', icon: <><path d="M4.500 3.500h8v10h-8z" fill="#fff" stroke="#111" /><path d="M6 6h1M9 6h3M6 8.500h1M9 8.500h3M6 11h1M9 11h3" stroke="#111" /></> },
  { label: '选择循环', icon: <><path d="M0 4.500h9M4.500 0v9" stroke="#333" /><path d="M5.500 5.500h8v8h-8z" fill="#eee" stroke="#444" /><path d="M8.500 8.500h7v7h-7z" fill="#8cc66a" stroke={green} /></> },
]

function StatusButton({ label, on, children, className = 'w-[22px]' }: {
  label: string
  on?: boolean
  children: ReactNode
  className?: string
}) {
  return (
    <button
      aria-label={label}
      className={clsx(
        'flex h-full flex-shrink-0 items-center justify-center border-l border-[#555]',
        on ? 'bg-linear-to-b from-[#d5eaf0] via-[#a5d3e0] to-[#c5e6ee] text-[#222]' : 'bg-linear-to-b from-[#c2c2c2] to-[#a8a8a8] text-[#333]',
        className,
      )}
    >
      {children}
    </button>
  )
}

const scaleMan = <path d="M7 1.500h2v6.500l5.500 5v1.500h-2.500L8 11l-4 3.500H1.500V13L7 8zM8 8v3" fill="#f4f4f4" stroke="#444" />

function StatusBar() {
  return (
    <footer className="flex h-[25px] flex-shrink-0 border-b-[3px] border-t border-t-black border-b-[#e4e1da] bg-linear-to-b from-[#989898] to-[#7c7c7c] text-[12px] text-black">
      <div className="flex w-[205px] items-center pl-3"><Txt t="28446.27, 60562.91, 0.00" /></div>
      <div className="flex border-r border-[#555]">
        {toggles.map((t) => (
          <StatusButton key={t.label} label={t.label} on={t.on}><Ico>{t.icon}</Ico></StatusButton>
        ))}
      </div>
      <div className="ml-auto flex">
        <StatusButton label="模型" className="w-[30px]">模型</StatusButton>
        <StatusButton label="快速查看布局"><Ico><path d="M2.500 1.500h11v10h-11z" fill="#fff" stroke="#444" /><path d="M5 4l5 5.500H5z" stroke="#222" /><path d="M0 14.500h16" strokeWidth="2" /></Ico></StatusButton>
        <StatusButton label="快速查看图形"><Ico><path d="M.500 2.500h7v7h-7zM8.500 2.500h7v7h-7z" fill="#fff" stroke="#444" /><path d="M0 11.500h16M1 14.500h14" strokeWidth="2" /></Ico></StatusButton>
        <div className="w-[18px] border-l border-[#555]" />
        <StatusButton label="注释比例" className="w-[54px] gap-[3px]">
          <Ico>{scaleMan}</Ico>
          <span className="font-['DejaVu_Sans_Mono',monospace] text-[10px]">1:1</span>
        </StatusButton>
        <StatusButton label="注释可见性"><Ico>{scaleMan}<circle cx="13" cy="9" r="2.500" fill="#ffd860" stroke="#e08a20" /></Ico></StatusButton>
        <StatusButton label="自动缩放"><Ico className="opacity-50">{scaleMan}<path d="M1 6 5 1v4h3L4 9z" fill="#ccc" /></Ico></StatusButton>
        <div className="w-[6px] border-l border-[#555]" />
        <StatusButton label="切换工作空间"><GearIcon className="text-[#444]" /></StatusButton>
        <StatusButton label="锁定"><Ico><path d="M1.500 7.500h9v7h-9z" fill="#eee" stroke="#444" /><path d="M8.500 7V4c0-3.500 6-3.500 6 0v3" stroke="#444" strokeWidth="1.500" /><path d="M6 9.500v3" stroke="#444" strokeWidth="1.500" /></Ico></StatusButton>
        <StatusButton label="硬件加速"><Ico><path d="M1.500 3.500h11v5h-11z" fill="#b7c6d8" stroke="#446" /><path d="M3.500 1v2M6.500 1v2M9.500 1v2M3.500 9v2M6.500 9v2" stroke="#446" /><circle cx="12.500" cy="10" r="3" fill="#cde6ff" stroke="#5a8fc8" /><path d="M12.500 13v3" stroke="#446" strokeWidth="2" /></Ico></StatusButton>
        <div className="my-px flex w-[52px] items-center gap-[5px] border border-[#444] bg-[#8b8b8b] px-[5px]">
          <Ico><path d="M1.500 1.500h9l2 3v6h-11z" fill="#4b86c6" stroke="#234a78" /><path d="M2 8h9v4H2z" fill="#f2c838" stroke="none" /><path d="m6 11 3 3 6-6" stroke="#3f9a22" strokeWidth="2.500" /></Ico>
          <Ico><path d="M5 9C1.500 5.500 4 1 8 1s6.500 4.500 3 8v2H5z" fill="#ffe98a" stroke="#b98a20" /><path d="M6 12.500h4M6.500 14.500h3" stroke="#555" /></Ico>
        </div>
        <StatusButton label="状态栏菜单" className="w-[10px]"><SmallCaret className="text-black" /></StatusButton>
        <StatusButton label="全屏显示" className="w-6"><Ico><path d="M.500 1.500h15v13H.500z" fill="#f2f2f2" stroke="#333" /><path d="M1 3h14" stroke="#3a4a60" strokeWidth="3" /></Ico></StatusButton>
      </div>
    </footer>
  )
}

export default function App() {
  return (
    <div className="relative flex h-screen flex-col overflow-hidden bg-[#696969] font-['Noto_Sans_CJK_SC',sans-serif]">
      <TitleBar />
      <RibbonTabs />
      <Ribbon />
      <div className="h-2 flex-shrink-0 border-b border-[#8a8a8a] bg-[#666]" />
      <Canvas />
      <LayoutTabs />
      <CommandLine />
      <StatusBar />
      <WriteBlockDialog />
    </div>
  )
}
